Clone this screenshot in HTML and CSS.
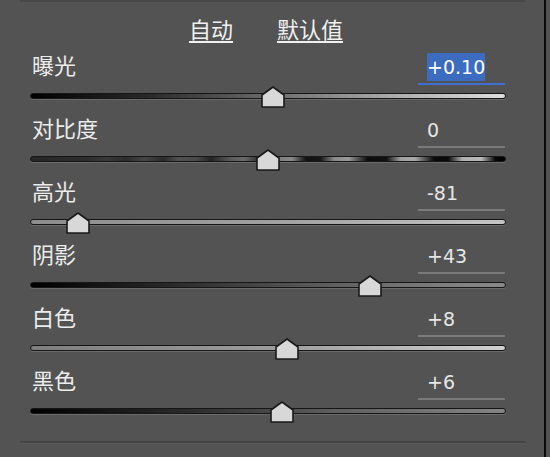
FILE: index.html
```html
<!DOCTYPE html>
<html lang="zh">
<head>
<meta charset="utf-8">
<link rel="stylesheet" href="styles.css">
</head>
<body>
<div class="page">
  <div class="panel">
    <div class="sep top"></div>
    <div class="header">
      <span class="link">自动</span>
      <span class="link">默认值</span>
    </div>
    <div class="rows">
      <div class="row">
        <div class="labelrow"><span class="label">曝光</span><span class="value active"><span class="sel">+0.10</span></span></div>
        <div class="slider"><div class="track t-exposure"></div><svg class="thumb" style="left:51%" viewBox="0 0 24 22"><path d="M1 21V9L12 1L23 9V21Z"/></svg></div>
      </div>
      <div class="row">
        <div class="labelrow"><span class="label">对比度</span><span class="value">0</span></div>
        <div class="slider"><div class="track t-contrast"></div><svg class="thumb" style="left:50%" viewBox="0 0 24 22"><path d="M1 21V9L12 1L23 9V21Z"/></svg></div>
      </div>
      <div class="row">
        <div class="labelrow"><span class="label">高光</span><span class="value">-81</span></div>
        <div class="slider"><div class="track t-high"></div><svg class="thumb" style="left:10%" viewBox="0 0 24 22"><path d="M1 21V9L12 1L23 9V21Z"/></svg></div>
      </div>
      <div class="row">
        <div class="labelrow"><span class="label">阴影</span><span class="value">+43</span></div>
        <div class="slider"><div class="track t-shadow"></div><svg class="thumb" style="left:71.5%" viewBox="0 0 24 22"><path d="M1 21V9L12 1L23 9V21Z"/></svg></div>
      </div>
      <div class="row">
        <div class="labelrow"><span class="label">白色</span><span class="value">+8</span></div>
        <div class="slider"><div class="track t-white"></div><svg class="thumb" style="left:54%" viewBox="0 0 24 22"><path d="M1 21V9L12 1L23 9V21Z"/></svg></div>
      </div>
      <div class="row">
        <div class="labelrow"><span class="label">黑色</span><span class="value">+6</span></div>
        <div class="slider"><div class="track t-black"></div><svg class="thumb" style="left:53%" viewBox="0 0 24 22"><path d="M1 21V9L12 1L23 9V21Z"/></svg></div>
      </div>
    </div>
    <div class="sep bottom"></div>
  </div>
  <div class="vline"></div>
  <div class="rest"></div>
</div>
</body>
</html>
```
FILE: styles.css
```css
html, body {
  margin: 0;
  padding: 0;
  background: #535353;
}
body {
  width: 550px;
  height: 457px;
  overflow: hidden;
  font-family: "Noto Sans CJK SC", "DejaVu Sans", sans-serif;
}
.page {
  display: flex;
  height: 457px;
}
.panel {
  width: 544px;
  display: flex;
  flex-direction: column;
}
.vline {
  width: 2px;
  background: #0c0c0c;
}
.rest {
  flex: 1;
}
.sep {
  height: 2px;
  margin: 0 19px 0 20px;
}
.sep.top {
  background: #474747;
}
.sep.bottom {
  margin-top: 14px;
  background: #444444;
  box-shadow: 0 1px 0 #5a5a5a;
}
.header {
  height: 33px;
  padding-top: 14px;
  margin: 0 38px 0 30px;
  padding-right: 4px;
  display: flex;
  justify-content: center;
  gap: 44px;
  line-height: 24px;
  font-size: 22px;
  color: #f0f0f0;
}
.link {
  text-decoration: underline;
  text-underline-offset: 3px;
  text-decoration-thickness: 1.5px;
}
.rows {
  display: flex;
  flex-direction: column;
  margin: 0 38px 0 30px;
}
.row {
  height: 63px;
}
.labelrow {
  height: 36px;
  display: flex;
  justify-content: space-between;
  align-items: flex-start;
}
.label {
  padding-left: 2px;
  font-size: 22px;
  line-height: 31px;
  color: #ececec;
}
.value {
  width: 78px;
  height: 34px;
  margin-right: 1px;
  padding-left: 9px;
  box-sizing: content-box;
  font-family: "DejaVu Sans", sans-serif;
  font-size: 19px;
  line-height: 36px;
  color: #e6e6e6;
  border-bottom: 2px solid #7a7a7a;
}
.value.active {
  border-bottom-color: #3f6fd0;
}
.sel {
  background: #3c6cbf;
  color: #ffffff;
  padding: 3px 0 3px 0;
}
.slider {
  position: relative;
  height: 27px;
}
.track {
  position: absolute;
  left: 0;
  right: 0;
  top: 8px;
  height: 4px;
  border: 1px solid #161616;
  border-radius: 3px;
  box-shadow: 0 1px 0 rgba(255, 255, 255, 0.14);
}
.t-exposure {
  background: linear-gradient(to right, #000 0%, #2a2a2a 25%, #6a6a6a 50%, #a8a8a8 75%, #dedede 100%);
}
.t-contrast {
  background: linear-gradient(to right,
    #262626 0%, #2e2e2e 12%, #393939 16%, #2c2c2c 20%, #454545 24%, #2a2a2a 28%,
    #505050 31%, #4a4a4a 35%, #232323 38%, #5a5a5a 42%, #686868 45%, #1e1e1e 49%,
    #7a7a7a 52%, #8a8a8a 55%, #111 58%, #151515 61%, #8a8a8a 64%, #999 67%, #0c0c0c 71%,
    #111 75%, #a0a0a0 78%, #a8a8a8 81%, #0a0a0a 85%, #0a0a0a 88%, #b0b0b0 91%, #b8b8b8 95%, #050505 98%, #000 100%);
}
.t-high {
  background: linear-gradient(to right, #8c8c8c 0%, #a0a0a0 50%, #c4c4c4 100%);
}
.t-shadow {
  background: linear-gradient(to right, #000 0%, #2a2a2a 30%, #5a5a5a 60%, #7c7c7c 85%, #8a8a8a 100%);
}
.t-white {
  background: linear-gradient(to right, #7e7e7e 0%, #9c9c9c 50%, #cfcfcf 100%);
}
.t-black {
  background: linear-gradient(to right, #000 0%, #2e2e2e 35%, #606060 65%, #848484 100%);
}
.thumb {
  position: absolute;
  top: 1px;
  width: 24px;
  height: 22px;
  margin-left: -12px;
  overflow: visible;
}
.thumb path {
  fill: #d8d8d8;
  stroke: #1a1a1a;
  stroke-width: 1.6;
  stroke-linejoin: round;
}
```
